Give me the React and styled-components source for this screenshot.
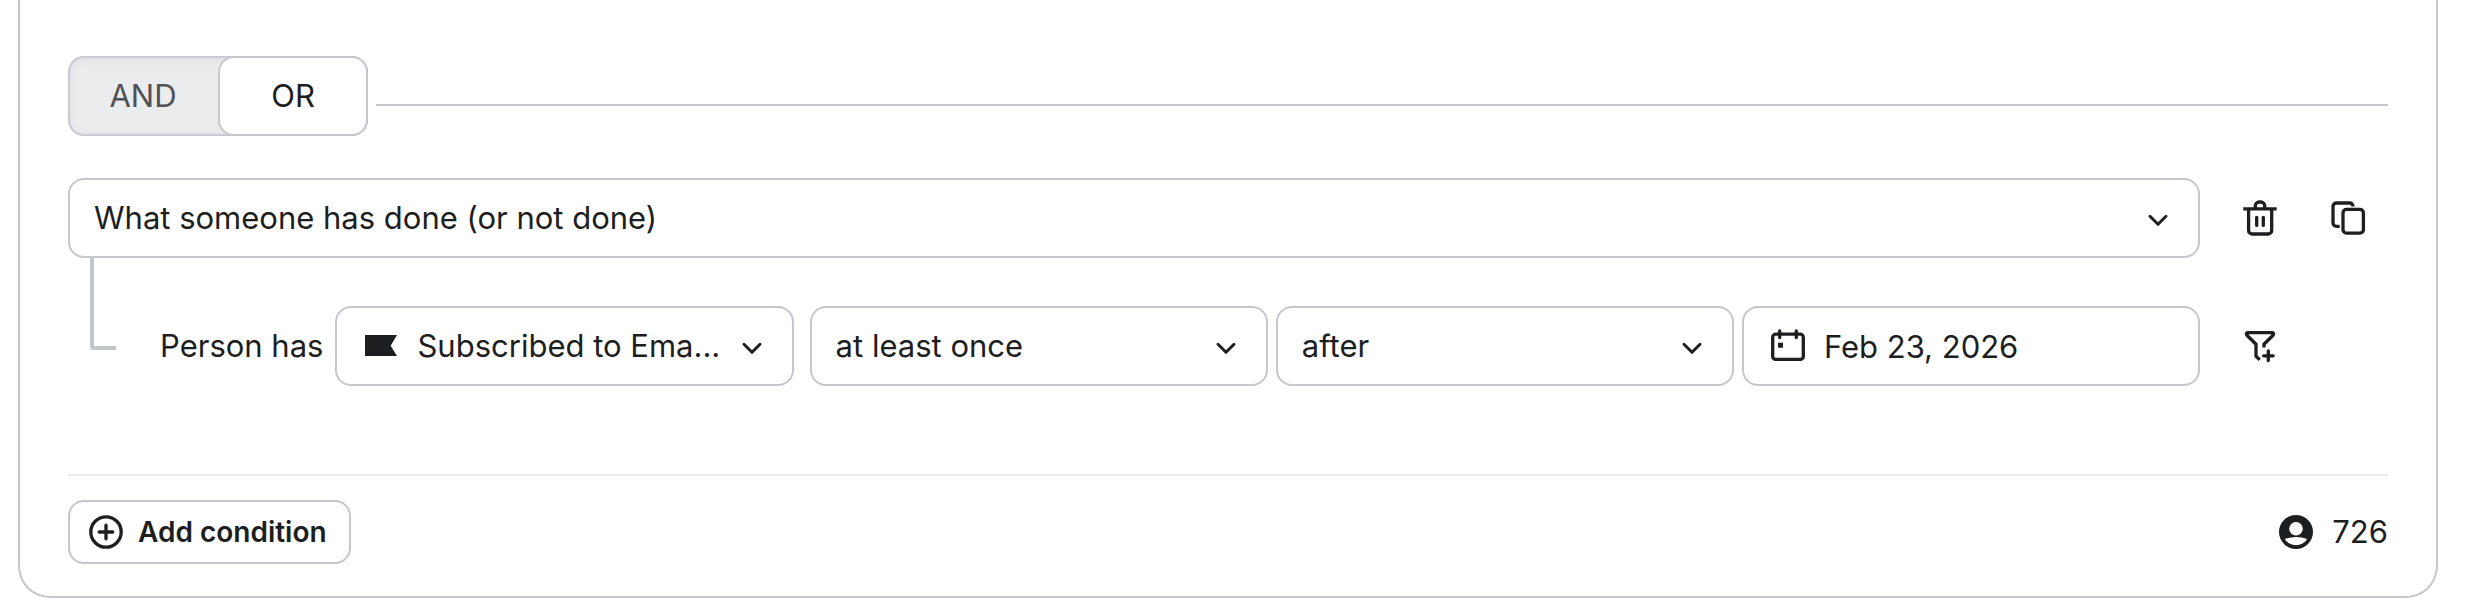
import React from "react";
import styled, { createGlobalStyle } from "styled-components";

const GlobalStyle = createGlobalStyle`
  *,
  *::before,
  *::after {
    box-sizing: border-box;
  }

  body {
    margin: 0;
    background: #ffffff;
    color: #1d1e20;
    font-family: Inter, "Liberation Sans", sans-serif;
    font-size: 31px;
    line-height: 40px;
  }

  button,
  input,
  select {
    margin: 0;
    color: inherit;
    font: inherit;
  }
`;

const Card = styled.section`
  margin: 0 38px 0 18px;
  padding: 56px 48px 32px;
  border: 2px solid #c6c7cc;
  border-top: none;
  border-radius: 0 0 32px 32px;
`;

const OperatorRow = styled.div`
  display: flex;
  align-items: center;
  gap: 8px;
  margin-bottom: 42px;
`;

const Toggle = styled.div`
  display: flex;
  border-radius: 16px;
  background: #ebecee;
  box-shadow: inset 0 0 0 2px #c9cbd0, inset 0 2px 8px 1px #d8dade;
`;

const ToggleButton = styled.button`
  width: 150px;
  height: 80px;
  padding: 0;
  border: 2px solid ${(props) => (props.$active ? "#c6c7cc" : "transparent")};
  border-radius: 16px;
  background: ${(props) => (props.$active ? "#ffffff" : "transparent")};
  color: ${(props) => (props.$active ? "#1d1e20" : "#505154")};
`;

const Line = styled.div`
  flex: 1;
  height: 2px;
  margin-top: 18px;
  background: #c6c7cc;
`;

const Row = styled.div`
  display: grid;
  grid-template-columns: 1fr 168px;
  column-gap: 20px;
  align-items: end;
`;

const Actions = styled.div`
  display: flex;
  gap: 8px;
`;

const IconButton = styled.button`
  display: flex;
  align-items: center;
  justify-content: center;
  width: 80px;
  height: 80px;
  padding: 0;
  border: none;
  background: none;
`;

const Icon = styled.svg`
  display: block;
  flex: none;
  width: 40px;
  height: 40px;
  fill: none;
  stroke: currentColor;
  stroke-width: 3.3;
`;

const Field = styled.div`
  display: grid;
  flex: 1;
  min-width: 0;
  align-items: center;

  > * {
    grid-area: 1 / 1;
  }
`;

const control = `
  width: 100%;
  min-width: 0;
  height: 80px;
  border: 2px solid #c6c7cc;
  border-radius: 16px;
  background: #ffffff;
`;

const Select = styled.select`
  ${control}
  appearance: none;
  padding: 0 64px 0 ${(props) => (props.$icon ? "80px" : "24px")};
`;

const Input = styled.input`
  ${control}
  padding: 0 24px 0 80px;
`;

const LeadingIcon = styled(Icon)`
  margin-left: 26px;
  pointer-events: none;
`;

const Chevron = styled(Icon)`
  justify-self: end;
  margin-right: 22px;
  pointer-events: none;
`;

const Condition = styled.div`
  display: flex;
  align-items: flex-start;
  padding-left: 22px;
`;

const Connector = styled.div`
  flex: none;
  width: 26px;
  height: 92px;
  border: solid #c3c7cc;
  border-width: 0 0 4px 4px;
  border-bottom-left-radius: 4px;
`;

const Fields = styled.div`
  display: flex;
  flex: 1;
  align-items: center;
  gap: 12px;
  min-width: 0;
  padding: 48px 0 0 44px;
`;

const FieldGroup = styled.div`
  display: flex;
  flex: 1;
  gap: 8px;
  min-width: 0;

  > :first-child {
    margin-right: 8px;
  }
`;

const Footer = styled.footer`
  display: flex;
  align-items: center;
  justify-content: space-between;
  margin-top: 88px;
  padding-top: 24px;
  border-top: 2px solid #ebebed;
`;

const AddButton = styled.button`
  display: flex;
  align-items: center;
  gap: 12px;
  height: 64px;
  padding: 0 22px 0 16px;
  border: 2px solid #c6c7cc;
  border-radius: 16px;
  background: #ffffff;
  font-size: 28px;
  font-weight: 600;
`;

const Count = styled.div`
  display: flex;
  align-items: center;
  gap: 16px;
`;

const ChevronIcon = () => (
  <Chevron viewBox="0 0 40 40" aria-hidden="true">
    <path
      d="M12 18.3l8 8 8-8"
      strokeWidth="3"
      strokeLinecap="round"
      strokeLinejoin="round"
    />
  </Chevron>
);

const FlagIcon = () => (
  <LeadingIcon viewBox="0 0 40 40" aria-hidden="true">
    <path d="M4 9h32l-6.3 10.7L36 30H4z" fill="currentColor" stroke="none" />
  </LeadingIcon>
);

const CalendarIcon = () => (
  <LeadingIcon viewBox="0 0 40 40" aria-hidden="true">
    <rect x="4.7" y="8.2" width="30.6" height="25.2" rx="3" />
    <path d="M11.7 5v6.6M28.3 5v6.6" strokeLinecap="round" />
    <rect
      x="10"
      y="16.7"
      width="5"
      height="5"
      fill="currentColor"
      stroke="none"
    />
  </LeadingIcon>
);

const TrashIcon = () => (
  <Icon viewBox="0 0 40 40" aria-hidden="true">
    <path d="M3.3 10.8h33.4M8.6 10.8v21.6a3.6 3.6 0 0 0 3.6 3.6h15.9a3.6 3.6 0 0 0 3.6-3.6V10.8" />
    <path d="M15.3 10.8V8a4 4 0 0 1 4-4h1.4a4 4 0 0 1 4 4v2.8" />
    <path d="M16.7 19.3v8.1M23.3 19.3v8.1" strokeLinecap="round" />
  </Icon>
);

const CopyIcon = () => (
  <Icon viewBox="0 0 40 40" aria-hidden="true">
    <rect x="15" y="11.4" width="20.4" height="23.7" rx="3.4" />
    <path d="M11.7 28.4H8.4A3.4 3.4 0 0 1 5 25V8.4A3.4 3.4 0 0 1 8.4 5H21.6A3.4 3.4 0 0 1 25 8.4" />
  </Icon>
);

const FilterIcon = () => (
  <Icon viewBox="0 0 40 40" aria-hidden="true">
    <path d="M19.8 33.8L16 30.2V18.3L7.2 9.5C5.9 8 6.2 6.7 7.8 6.7h24.4c1.6 0 1.9 1.3.6 2.8L24 18.3v3.3" />
    <path d="M28.3 25v9.6M23.6 29.8h9.6" strokeLinecap="round" />
  </Icon>
);

const PlusCircleIcon = () => (
  <Icon viewBox="0 0 40 40" aria-hidden="true">
    <circle cx="20" cy="20" r="15.2" />
    <path d="M20 13.2v13.6M13.2 20h13.6" strokeLinecap="round" />
  </Icon>
);

const PersonIcon = () => (
  <Icon viewBox="0 0 40 40" aria-hidden="true">
    <circle cx="20" cy="20" r="17" fill="currentColor" stroke="none" />
    <circle cx="20" cy="16.7" r="6.8" fill="#ffffff" stroke="none" />
    <path
      d="M8.8 27Q20 23.2 31.2 27A13.2 13.2 0 0 1 8.8 27z"
      fill="#ffffff"
      stroke="none"
    />
  </Icon>
);

const SelectField = ({ label, value, icon }) => (
  <Field>
    <Select aria-label={label} $icon={Boolean(icon)}>
      <option>{value}</option>
    </Select>
    {icon}
    <ChevronIcon />
  </Field>
);

const App = () => {
  return (
    <>
      <GlobalStyle />
      <Card>
        <OperatorRow>
          <Toggle role="group">
            <ToggleButton type="button" aria-pressed="false">
              AND
            </ToggleButton>
            <ToggleButton type="button" aria-pressed="true" $active>
              OR
            </ToggleButton>
          </Toggle>
          <Line />
        </OperatorRow>
        <Row>
          <SelectField
            label="Condition type"
            value="What someone has done (or not done)"
          />
          <Actions>
            <IconButton type="button" aria-label="Delete">
              <TrashIcon />
            </IconButton>
            <IconButton type="button" aria-label="Duplicate">
              <CopyIcon />
            </IconButton>
          </Actions>
        </Row>
        <Row>
          <Condition>
            <Connector />
            <Fields>
              <span>Person has</span>
              <FieldGroup>
                <SelectField
                  label="Metric"
                  value="Subscribed to Ema..."
                  icon={<FlagIcon />}
                />
                <SelectField label="Frequency" value="at least once" />
                <SelectField label="Timeframe" value="after" />
                <Field>
                  <Input aria-label="Date" defaultValue="Feb 23, 2026" />
                  <CalendarIcon />
                </Field>
              </FieldGroup>
            </Fields>
          </Condition>
          <Actions>
            <IconButton type="button" aria-label="Add filter">
              <FilterIcon />
            </IconButton>
          </Actions>
        </Row>
        <Footer>
          <AddButton type="button">
            <PlusCircleIcon />
            Add condition
          </AddButton>
          <Count>
            <PersonIcon />
            <span>726</span>
          </Count>
        </Footer>
      </Card>
    </>
  );
};

export default App;
